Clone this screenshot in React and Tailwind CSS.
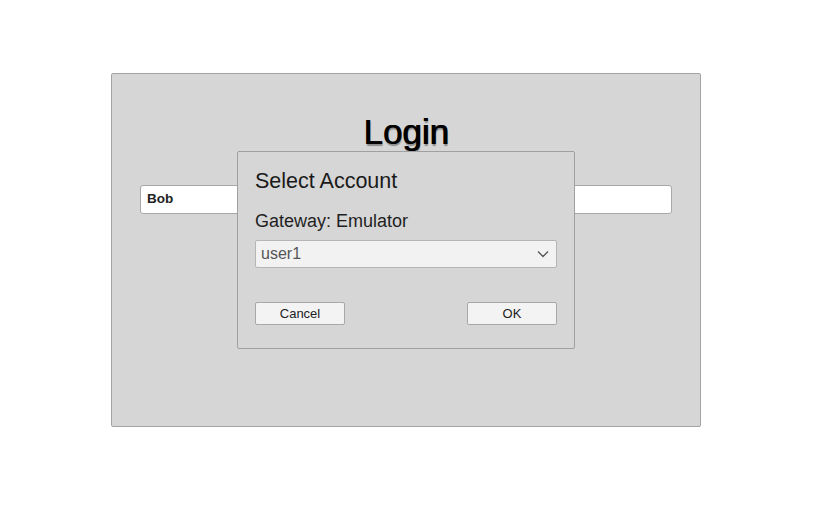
export default function App() {
  return (
    <div className="w-[830px] h-[506px] bg-white relative overflow-hidden" style={{ fontFamily: '"Liberation Sans", Arial, sans-serif' }}>
      <div className="absolute left-[111px] top-[73px] w-[590px] h-[354px] bg-[#d6d6d6] border border-[#a3a3a3] rounded-[2px] flex flex-col items-center">
        <div className="mt-[38px] h-[40px] leading-[40px] text-[35px] text-black [text-shadow:0.9px_0_0_#000,1px_2px_1px_rgba(0,0,0,0.35)]">Login</div>
        <div className="mt-[33px] self-start ml-[28px] w-[532px] h-[29px] bg-white border border-[#a8a8a8] rounded-[3px] flex items-center pl-[6px] pb-[1px] text-[13.5px] font-bold text-[#222]">Bob</div>
      </div>
      <div className="absolute left-[237px] top-[151px] w-[338px] h-[198px] bg-[#d6d6d6] border border-[#a0a0a0] rounded-[2px] px-[17px] flex flex-col">
        <div className="mt-[16px] text-[21.5px] leading-[26px] text-[#1a1a1a]">Select Account</div>
        <div className="mt-[16px] text-[18px] leading-[22px] text-[#1f1f1f]">Gateway: Emulator</div>
        <div className="mt-[8px] h-[28px] bg-[#f2f2f2] border border-[#b5b5b5] rounded-[2px] flex items-center justify-between pl-[5px] pr-[7px]">
          <span className="text-[16px] text-[#555]">user1</span>
          <svg width="12" height="8" viewBox="0 0 12 8" fill="none" stroke="#555" strokeWidth="1.3"><path d="M1 1.5 L6 6.5 L11 1.5" /></svg>
        </div>
        <div className="mt-[34px] flex justify-between">
          <div className="w-[90px] h-[23px] bg-[#f3f3f3] border border-[#a8a8a8] rounded-[2px] flex items-center justify-center text-[13px] text-[#222]">Cancel</div>
          <div className="w-[90px] h-[23px] bg-[#f3f3f3] border border-[#a8a8a8] rounded-[2px] flex items-center justify-center text-[13px] text-[#222]">OK</div>
        </div>
      </div>
    </div>
  );
}
